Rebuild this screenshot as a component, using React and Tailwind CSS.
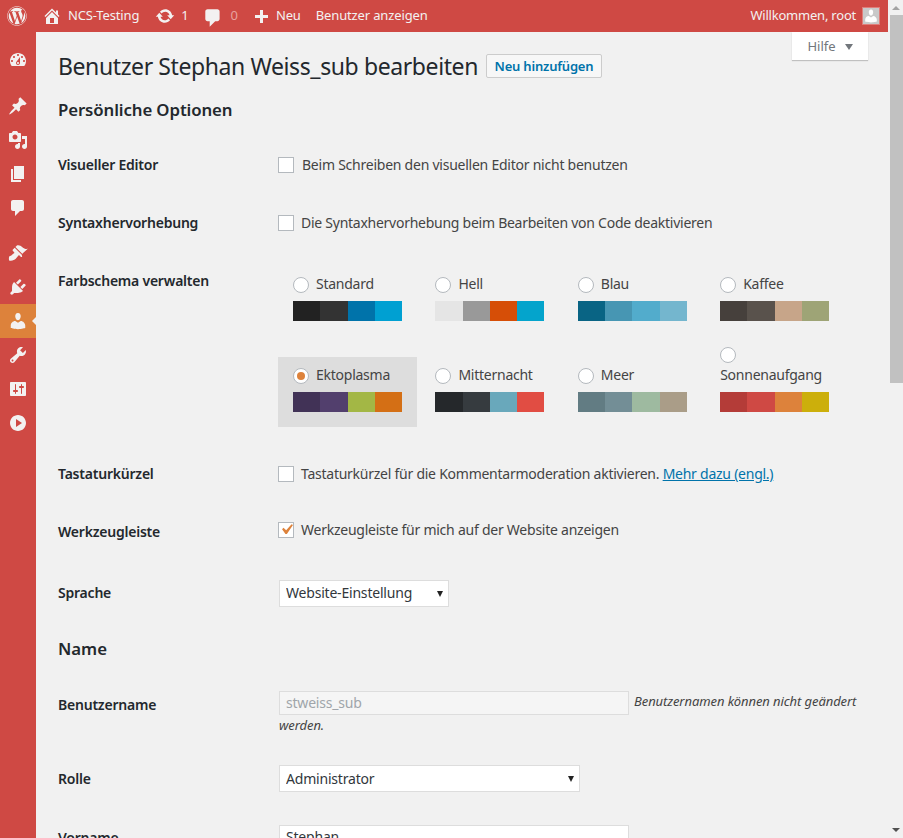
import React from 'react';
import { FaWordpress } from 'react-icons/fa';

const paths = {
  home: 'M16 8.5l1.53 1.53-1.06 1.06L10 4.62l-6.47 6.47-1.06-1.06L10 2.5l4 4v-2h2v4zm-6-2.46l6 5.99V18H4v-5.97zM12 17v-5H8v5h4z',
  update: 'M10.2 3.28c3.53 0 6.43 2.61 6.92 6h2.08l-3.5 4-3.5-4h2.32c-.45-1.97-2.21-3.45-4.32-3.45-1.45 0-2.73.71-3.54 1.78L4.95 5.66C6.23 4.2 8.11 3.28 10.2 3.28zm-.4 13.44c-3.52 0-6.43-2.61-6.92-6H.8l3.5-4c1.17 1.33 2.33 2.67 3.5 4H5.48c.45 1.97 2.21 3.45 4.32 3.45 1.45 0 2.73-.71 3.54-1.78l1.71 1.95c-1.28 1.46-3.15 2.38-5.25 2.38z',
  comment: 'M5 2h9c1.1 0 2 .9 2 2v7c0 1.1-.9 2-2 2h-2l-5 5v-5H5c-1.1 0-2-.9-2-2V4c0-1.1.9-2 2-2z',
  plus: 'M17 7v3h-5v5H9v-5H4V7h5V2h3v5h5z',
  dashboard: 'M3.76 16h12.48c1.1-1.37 1.76-3.11 1.76-5 0-4.42-3.58-8-8-8s-8 3.58-8 8c0 1.89.66 3.63 1.76 5zM10 4c.55 0 1 .45 1 1s-.45 1-1 1-1-.45-1-1 .45-1 1-1zM6 6c.55 0 1 .45 1 1s-.45 1-1 1-1-.45-1-1 .45-1 1-1zm8 0c.55 0 1 .45 1 1s-.45 1-1 1-1-.45-1-1 .45-1 1-1zm-5.37 5.55L12 7v6c0 1.1-.9 2-2 2s-2-.9-2-2c0-.57.24-1.08.63-1.45zM4 10c.55 0 1 .45 1 1s-.45 1-1 1-1-.45-1-1 .45-1 1-1zm12 0c.55 0 1 .45 1 1s-.45 1-1 1-1-.45-1-1 .45-1 1-1zm-5 3c0-.55-.45-1-1-1s-1 .45-1 1 .45 1 1 1 1-.45 1-1z',
  pin: 'M10.44 3.02l1.82-1.82 6.36 6.35-1.83 1.82c-1.05-.68-2.48-.57-3.41.36l-.75.75c-.92.93-1.04 2.35-.35 3.41l-1.83 1.82-2.41-2.41-2.8 2.79c-.42.42-3.38 2.71-3.8 2.29s1.86-3.39 2.28-3.81l2.79-2.79L4.1 9.36l1.83-1.82c1.05.69 2.48.57 3.4-.36l.75-.75c.93-.92 1.05-2.35.36-3.41z',
  media: 'M13 11V4c0-.55-.45-1-1-1h-1.67L9 1H5L3.67 3H2c-.55 0-1 .45-1 1v7c0 .55.45 1 1 1h10c.55 0 1-.45 1-1zM7 4.5c1.38 0 2.5 1.12 2.5 2.5S8.38 9.5 7 9.5 4.5 8.38 4.5 7 5.62 4.5 7 4.5zM14 6h5v10.5c0 1.38-1.12 2.5-2.5 2.5S14 17.88 14 16.5s1.12-2.5 2.5-2.5c.17 0 .34.02.5.05V9h-3V6zm-4 8.05V13h2v3.5c0 1.38-1.12 2.5-2.5 2.5S7 17.88 7 16.5 8.12 14 9.5 14c.17 0 .34.02.5.05z',
  pages: 'M6 15V2h10v13H6zm-1 1h8v2H3V5h2v11z',
  brush: 'M14.48 11.06L7.41 3.99l1.5-1.5c.5-.56 2.3-.47 3.51.32 1.21.8 1.43 1.28 2.91 2.1 1.18.64 2.45 1.26 4.45.85l-5.8 5.3zm-.71.71L6.7 4.7 4.93 6.47c-.39.39-.39 1.02 0 1.41l1.06 1.06c.39.39.39 1.03 0 1.42-.6.6-1.43 1.11-2.21 1.69-.35.26-.7.53-1.01.84C1.43 12.23.4 14.85 1.1 17.55c2.7.7 5.3-.34 6.64-1.69.31-.31.58-.66.84-1.01.58-.78 1.09-1.61 1.69-2.21.39-.39 1.02-.39 1.41 0l1.06 1.06c.39.39 1.03.39 1.42 0z',
  plugin: 'M13.11 4.36L9.87 7.6 8 5.73l3.24-3.24c.35-.34 1.05-.2 1.56.32.52.51.66 1.21.31 1.55zm-8 1.77l.91-1.12 9.01 9.01-1.19.84c-.71.71-2.63 1.16-3.82 1.16H6.14L4.9 17.26c-.59.59-1.54.59-2.12 0-.59-.58-.59-1.53 0-2.12l1.24-1.24v-3.88c0-1.13.4-3.19 1.09-3.89zm7.26 3.97l3.24-3.24c.34-.35 1.04-.21 1.55.31.52.51.66 1.21.31 1.55l-3.24 3.25z',
  users: 'M10 9.25c-2.27 0-2.73-3.44-2.73-3.44C7 4.02 7.82 2 9.97 2c2.16 0 2.98 2.02 2.71 3.81 0 0-.41 3.44-2.68 3.44zm0 2.57L12.72 10c2.39 0 4.52 2.33 4.52 4.53v2.49s-3.65 1.13-7.24 1.13c-3.65 0-7.24-1.13-7.24-1.13v-2.49c0-2.25 1.94-4.48 4.47-4.48z',
  tools: 'M16.68 9.77c-1.34 1.34-3.3 1.67-4.95.99l-5.41 6.52c-.99.99-2.59.99-3.58 0s-.99-2.59 0-3.57l6.52-5.42c-.68-1.65-.35-3.61.99-4.95 1.28-1.28 3.12-1.62 4.72-1.06l-2.89 2.89 2.82 2.82 2.86-2.87c.53 1.58.18 3.39-1.08 4.65zM3.81 16.21c.4.39 1.04.39 1.43 0 .4-.4.4-1.04 0-1.43-.39-.4-1.03-.4-1.43 0-.39.39-.39 1.03 0 1.43z',
  settings: 'M18 16V4c0-.55-.45-1-1-1H3c-.55 0-1 .45-1 1v12c0 .55.45 1 1 1h14c.55 0 1-.45 1-1zM8 11h1c.55 0 1 .45 1 1s-.45 1-1 1H8v1.5c0 .28-.22.5-.5.5s-.5-.22-.5-.5V13H6c-.55 0-1-.45-1-1s.45-1 1-1h1V5.5c0-.28.22-.5.5-.5s.5.22.5.5V11zm5-2h-1c-.55 0-1-.45-1-1s.45-1 1-1h1V5.5c0-.28.22-.5.5-.5s.5.22.5.5V7h1c.55 0 1 .45 1 1s-.45 1-1 1h-1v5.5c0 .28-.22.5-.5.5s-.5-.22-.5-.5V9z',
  play: 'M10 2c4.42 0 8 3.58 8 8s-3.58 8-8 8-8-3.58-8-8 3.58-8 8-8zm-2 12l6-4-6-4v8z',
  yes: 'M14.83 4.89l1.34.94-5.81 8.38H9.02L5.78 9.67l1.34-1.25 2.57 2.4z',
};

function Dash({ name, className }) {
  return (
    <svg viewBox="0 0 20 20" fill="currentColor" className={className}>
      <path d={paths[name]} />
    </svg>
  );
}

const schemes = [
  { name: 'Standard', colors: ['#222222', '#333333', '#0073aa', '#00a0d2'] },
  { name: 'Hell', colors: ['#e5e5e5', '#999999', '#d64e07', '#04a4cc'] },
  { name: 'Blau', colors: ['#096484', '#4796b3', '#52accc', '#74b6ce'] },
  { name: 'Kaffee', colors: ['#46403c', '#59524c', '#c7a589', '#9ea476'] },
  { name: 'Ektoplasma', colors: ['#413256', '#523f6d', '#a3b745', '#d46f15'], selected: true },
  { name: 'Mitternacht', colors: ['#25282b', '#363b3f', '#69a8bb', '#e14d43'] },
  { name: 'Meer', colors: ['#627c83', '#738e96', '#9ebaa0', '#aa9d88'] },
  { name: 'Sonnenaufgang', colors: ['#b43c38', '#cf4944', '#dd823b', '#ccaf0b'] },
];

function Radio({ checked }) {
  return (
    <span className="flex h-[16px] w-[16px] shrink-0 items-center justify-center rounded-full border border-[#b4b9be] bg-white">
      {checked && <span className="h-[8px] w-[8px] rounded-full bg-[#dd823b]" />}
    </span>
  );
}

function Scheme({ scheme }) {
  return (
    <div className={`mr-[3.4px] w-[139px] px-[15px] pb-[15px] pt-[8px] ${scheme.selected ? 'bg-[#dddddd]' : ''}`}>
      <div className="flex flex-wrap items-center">
        <span className="flex h-[21px] items-center pr-[7px]">
          <Radio checked={scheme.selected} />
        </span>
        <span className="flex h-[21px] items-center pb-[2px] tracking-[-0.25px]">{scheme.name}</span>
      </div>
      <div className="mt-[6px] flex h-[20px]">
        {scheme.colors.map((c) => (
          <span key={c} className="h-full w-[27.25px]" style={{ background: c }} />
        ))}
      </div>
    </div>
  );
}

function Checkbox({ checked }) {
  return (
    <span className="flex h-[16px] w-[16px] shrink-0 items-center justify-center border border-[#b4b9be] bg-white">
      {checked && <Dash name="yes" className="h-[21px] w-[21px] shrink-0 text-[#dd823b]" />}
    </span>
  );
}

function Row({ label, children, className = '' }) {
  return (
    <div className={`flex ${className}`}>
      <div className="w-[220px] shrink-0 pt-[20px] font-semibold leading-[21px] text-[#23282d] tracking-[-0.22px]">{label}</div>
      <div className="min-w-0 flex-1">{children}</div>
    </div>
  );
}

function CheckRow({ label, checked, contentClass = 'h-[61px] gap-[7px] tracking-[-0.25px]', children }) {
  return (
    <Row label={label} className="h-[58px]">
      <div className={`flex items-center ${contentClass}`}>
        <Checkbox checked={checked} />
        <span>{children}</span>
      </div>
    </Row>
  );
}

function Select({ value, width, textClass = 'pb-[2px]' }) {
  return (
    <div className={`relative h-[27px] ${width}`}>
      <select className={`h-full w-full appearance-none border border-[#dddddd] bg-white px-[6px] text-[14px] tracking-[-0.2px] text-[#32373c] outline-none ${textClass}`} defaultValue={value}>
        <option>{value}</option>
      </select>
      <span className="absolute right-[6px] top-[11px] h-0 w-0 border-x-[3.5px] border-t-[6px] border-x-transparent border-t-[#222222]" />
    </div>
  );
}

function Bar() {
  return (
    <header className="flex h-[32px] shrink-0 items-center bg-[#cf4944] text-[13px] text-[#f3f1f1] tracking-[-0.14px]">
      <FaWordpress className="ml-[7px] h-[20px] w-[20px] text-[#f3f1f1]" />
      <Dash name="home" className="ml-[15px] h-[20px] w-[20px]" />
      <span className="ml-[6px]">NCS-Testing</span>
      <Dash name="update" className="ml-[16px] h-[20px] w-[20px]" />
      <span className="ml-[6px]">1</span>
      <Dash name="comment" className="ml-[13px] h-[22px] w-[22px] translate-y-[2px]" />
      <span className="ml-[7px] text-[#e8a19e]">0</span>
      <Dash name="plus" className="ml-[13px] h-[20px] w-[20px] translate-y-[2px]" />
      <span className="ml-[5px]">Neu</span>
      <span className="ml-[15px]">Benutzer anzeigen</span>
      <span className="ml-auto tracking-[-0.22px]">Willkommen, root</span>
      <span className="ml-[6px] mr-[8px] flex h-[18px] w-[18px] items-end justify-center overflow-hidden border border-[#e07e7a] bg-[#c9c9c9]">
        <Dash name="users" className="h-[16px] w-[16px] shrink-0 text-white" />
      </span>
    </header>
  );
}

function Sidebar() {
  const item = (name, active) => (
    <div key={name} className={`relative flex h-[34px] items-center justify-center ${active ? 'bg-[#dd823b]' : ''}`}>
      <Dash name={name} className="h-[20px] w-[20px] text-[#f3f1f1]" />
      {active && (
        <span className="absolute right-0 top-[13px] h-0 w-0 border-y-[4px] border-r-[4px] border-y-transparent border-r-[#f1f1f1]" />
      )}
    </div>
  );
  return (
    <nav className="w-[36px] shrink-0 bg-[#cf4944] pt-[11px]">
      {item('dashboard')}
      <div className="h-[12px]" />
      {['pin', 'media', 'pages', 'comment'].map((n) => item(n))}
      <div className="h-[11px]" />
      {item('brush')}
      {item('plugin')}
      {item('users', true)}
      {['tools', 'settings', 'play'].map((n) => item(n))}
    </nav>
  );
}

export default function App() {
  return (
    <div className="flex h-[838px] w-[903px] overflow-hidden bg-[#f1f1f1] text-[14px] text-[#444444] [font-family:'Noto_Sans',sans-serif]">
      <div className="flex w-[888px] shrink-0 flex-col">
        <Bar />
        <div className="relative flex min-h-0 flex-1">
          <Sidebar />
          <main className="min-w-0 flex-1 overflow-hidden pl-[22px] pr-[20px]">
            <div className="absolute right-[20px] top-0 flex h-[28px] w-[76px] items-center justify-center gap-[9px] bg-white pt-[1px] text-[13px] text-[#72777c] shadow-[0_1px_1px_rgba(0,0,0,0.2)]">
              Hilfe
              <span className="h-0 w-0 border-x-[4px] border-t-[6px] border-x-transparent border-t-[#72777c]" />
            </div>

            <div className="flex h-[67px] items-center pt-[1px]">
              <h1 className="text-[23px] text-[#23282d] tracking-[-0.4px]">Benutzer Stephan Weiss_sub bearbeiten</h1>
              <span className="ml-[8px] flex h-[24px] w-[116px] items-center justify-center rounded-[2px] border border-[#cccccc] bg-[#f7f7f7] pt-[1px] text-[13px] font-semibold tracking-[-0.2px] text-[#0073aa]">
                Neu hinzufügen
              </span>
            </div>
            <h2 className="flex h-[22px] items-center text-[16.8px] font-semibold tracking-[-0.1px] text-[#23282d]">Persönliche Optionen</h2>

            <div className="mt-[13px]">
              <CheckRow label="Visueller Editor" contentClass="h-[61px] gap-[8px] tracking-[-0.24px]">Beim Schreiben den visuellen Editor nicht benutzen</CheckRow>
              <CheckRow label="Syntaxhervorhebung" contentClass="h-[61px] gap-[7px] tracking-[-0.26px]">Die Syntaxhervorhebung beim Bearbeiten von Code deaktivieren</CheckRow>
              <Row label="Farbschema verwalten" className="h-[193px]">
                <div className="flex w-[600px] flex-wrap items-end pt-[16px]">
                  {schemes.map((s) => (
                    <Scheme key={s.name} scheme={s} />
                  ))}
                </div>
              </Row>
              <CheckRow label="Tastaturkürzel">
                Tastaturkürzel für die Kommentarmoderation aktivieren.{' '}
                <a className="text-[#0073aa] underline">Mehr dazu (engl.)</a>
              </CheckRow>
              <CheckRow label="Werkzeugleiste" checked contentClass="h-[57px] gap-[7px] tracking-[-0.24px]">Werkzeugleiste für mich auf der Website anzeigen</CheckRow>
              <Row label="Sprache" className="mt-[3px] h-[58px]">
                <div className="pl-[1px] pt-[18px]">
                  <Select value="Website-Einstellung" width="w-[170px]" />
                </div>
              </Row>
            </div>

            <h2 className="mt-[18px] flex h-[22px] items-center text-[16.8px] font-semibold text-[#23282d]">Name</h2>

            <div className="mt-[14px]">
              <Row label="Benutzername" className="h-[74px]">
                <div className="pl-[1px] pt-[17px] text-[13px] italic leading-[21px] tracking-[-0.08px]">
                  <input
                    disabled
                    value="stweiss_sub"
                    className="mr-[5px] h-[24px] w-[350px] border border-[#dddddd] bg-[#f5f5f5] px-[6px] pb-[2px] align-top text-[14px] not-italic tracking-[-0.2px] text-[#a0a5aa]"
                  />
                  Benutzernamen können nicht geändert werden.
                </div>
              </Row>
              <Row label="Rolle" className="h-[59px]">
                <div className="pl-[1px] pt-[17px]">
                  <Select value="Administrator" width="w-[301px]" textClass="pb-0" />
                </div>
              </Row>
              <Row label="Vorname">
                <div className="pl-[1px] pt-[18px]">
                  <input
                    readOnly
                    value="Stephan"
                    className="h-[24px] w-[350px] border border-[#dddddd] bg-white px-[6px] pb-[2px] text-[14px] tracking-[-0.2px] text-[#32373c]"
                  />
                </div>
              </Row>
            </div>
          </main>
        </div>
      </div>

      <aside className="relative w-[15px] shrink-0 bg-[#f1f1f1]">
        <span className="absolute left-[4px] top-[6px] h-0 w-0 border-x-[4px] border-b-[4px] border-x-transparent border-b-[#a3a3a3]" />
        <div className="ml-[2px] mt-[15px] h-[368px] bg-[#c1c1c1]" />
        <span className="absolute bottom-[6px] left-[4px] h-0 w-0 border-x-[4px] border-t-[4px] border-x-transparent border-t-[#505050]" />
      </aside>
    </div>
  );
}
